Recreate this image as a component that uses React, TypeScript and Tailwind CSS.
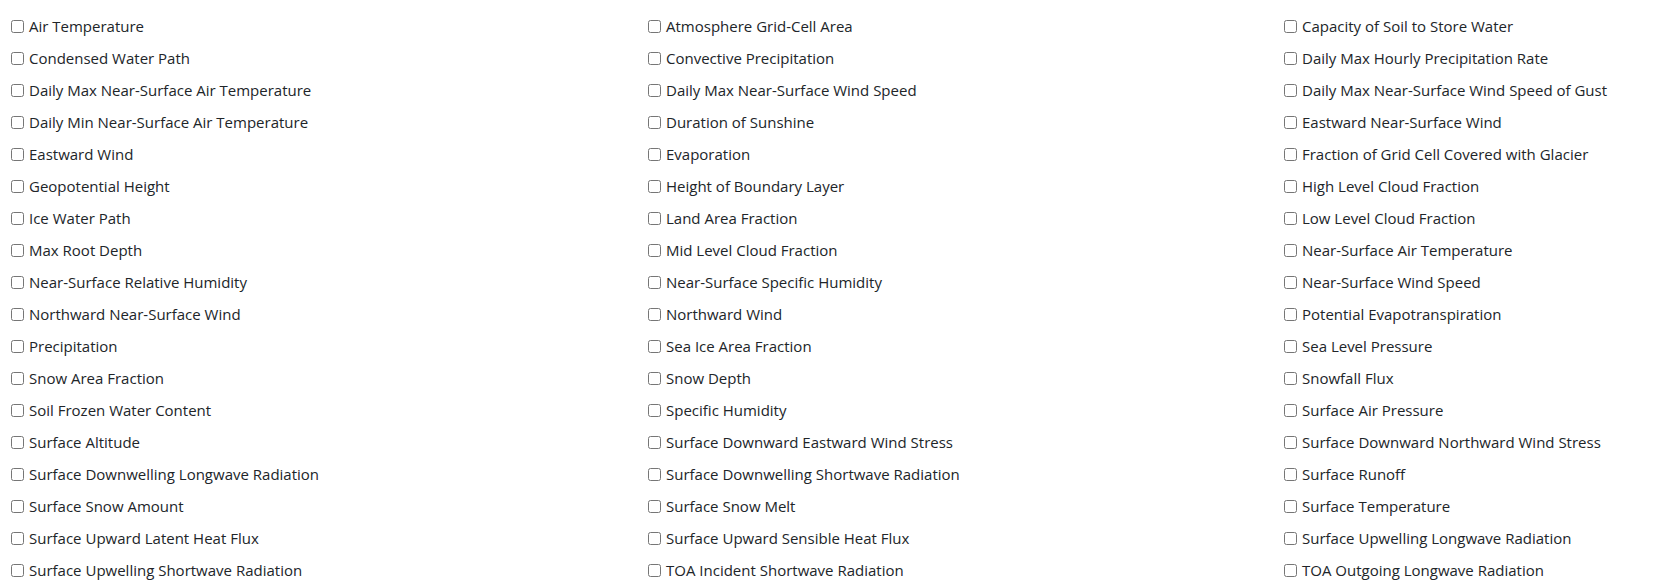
const variables = [
  'Air Temperature',
  'Atmosphere Grid-Cell Area',
  'Capacity of Soil to Store Water',
  'Condensed Water Path',
  'Convective Precipitation',
  'Daily Max Hourly Precipitation Rate',
  'Daily Max Near-Surface Air Temperature',
  'Daily Max Near-Surface Wind Speed',
  'Daily Max Near-Surface Wind Speed of Gust',
  'Daily Min Near-Surface Air Temperature',
  'Duration of Sunshine',
  'Eastward Near-Surface Wind',
  'Eastward Wind',
  'Evaporation',
  'Fraction of Grid Cell Covered with Glacier',
  'Geopotential Height',
  'Height of Boundary Layer',
  'High Level Cloud Fraction',
  'Ice Water Path',
  'Land Area Fraction',
  'Low Level Cloud Fraction',
  'Max Root Depth',
  'Mid Level Cloud Fraction',
  'Near-Surface Air Temperature',
  'Near-Surface Relative Humidity',
  'Near-Surface Specific Humidity',
  'Near-Surface Wind Speed',
  'Northward Near-Surface Wind',
  'Northward Wind',
  'Potential Evapotranspiration',
  'Precipitation',
  'Sea Ice Area Fraction',
  'Sea Level Pressure',
  'Snow Area Fraction',
  'Snow Depth',
  'Snowfall Flux',
  'Soil Frozen Water Content',
  'Specific Humidity',
  'Surface Air Pressure',
  'Surface Altitude',
  'Surface Downward Eastward Wind Stress',
  'Surface Downward Northward Wind Stress',
  'Surface Downwelling Longwave Radiation',
  'Surface Downwelling Shortwave Radiation',
  'Surface Runoff',
  'Surface Snow Amount',
  'Surface Snow Melt',
  'Surface Temperature',
  'Surface Upward Latent Heat Flux',
  'Surface Upward Sensible Heat Flux',
  'Surface Upwelling Longwave Radiation',
  'Surface Upwelling Shortwave Radiation',
  'TOA Incident Shortwave Radiation',
  'TOA Outgoing Longwave Radiation',
];

export default function App() {
  return (
    <div className="bg-white min-h-screen font-['Open_Sans',sans-serif] text-[15px] text-[#212529]">
      <div className="grid grid-cols-[637px_636px_1fr] pl-[11px] pt-[10px]">
        {variables.map((name) => (
          <label key={name} className="flex items-center h-[32px] cursor-pointer">
            <input type="checkbox" className="m-0 w-[13px] h-[13px] shrink-0" />
            <span className="ml-[5px] whitespace-nowrap">{name}</span>
          </label>
        ))}
      </div>
    </div>
  );
}
